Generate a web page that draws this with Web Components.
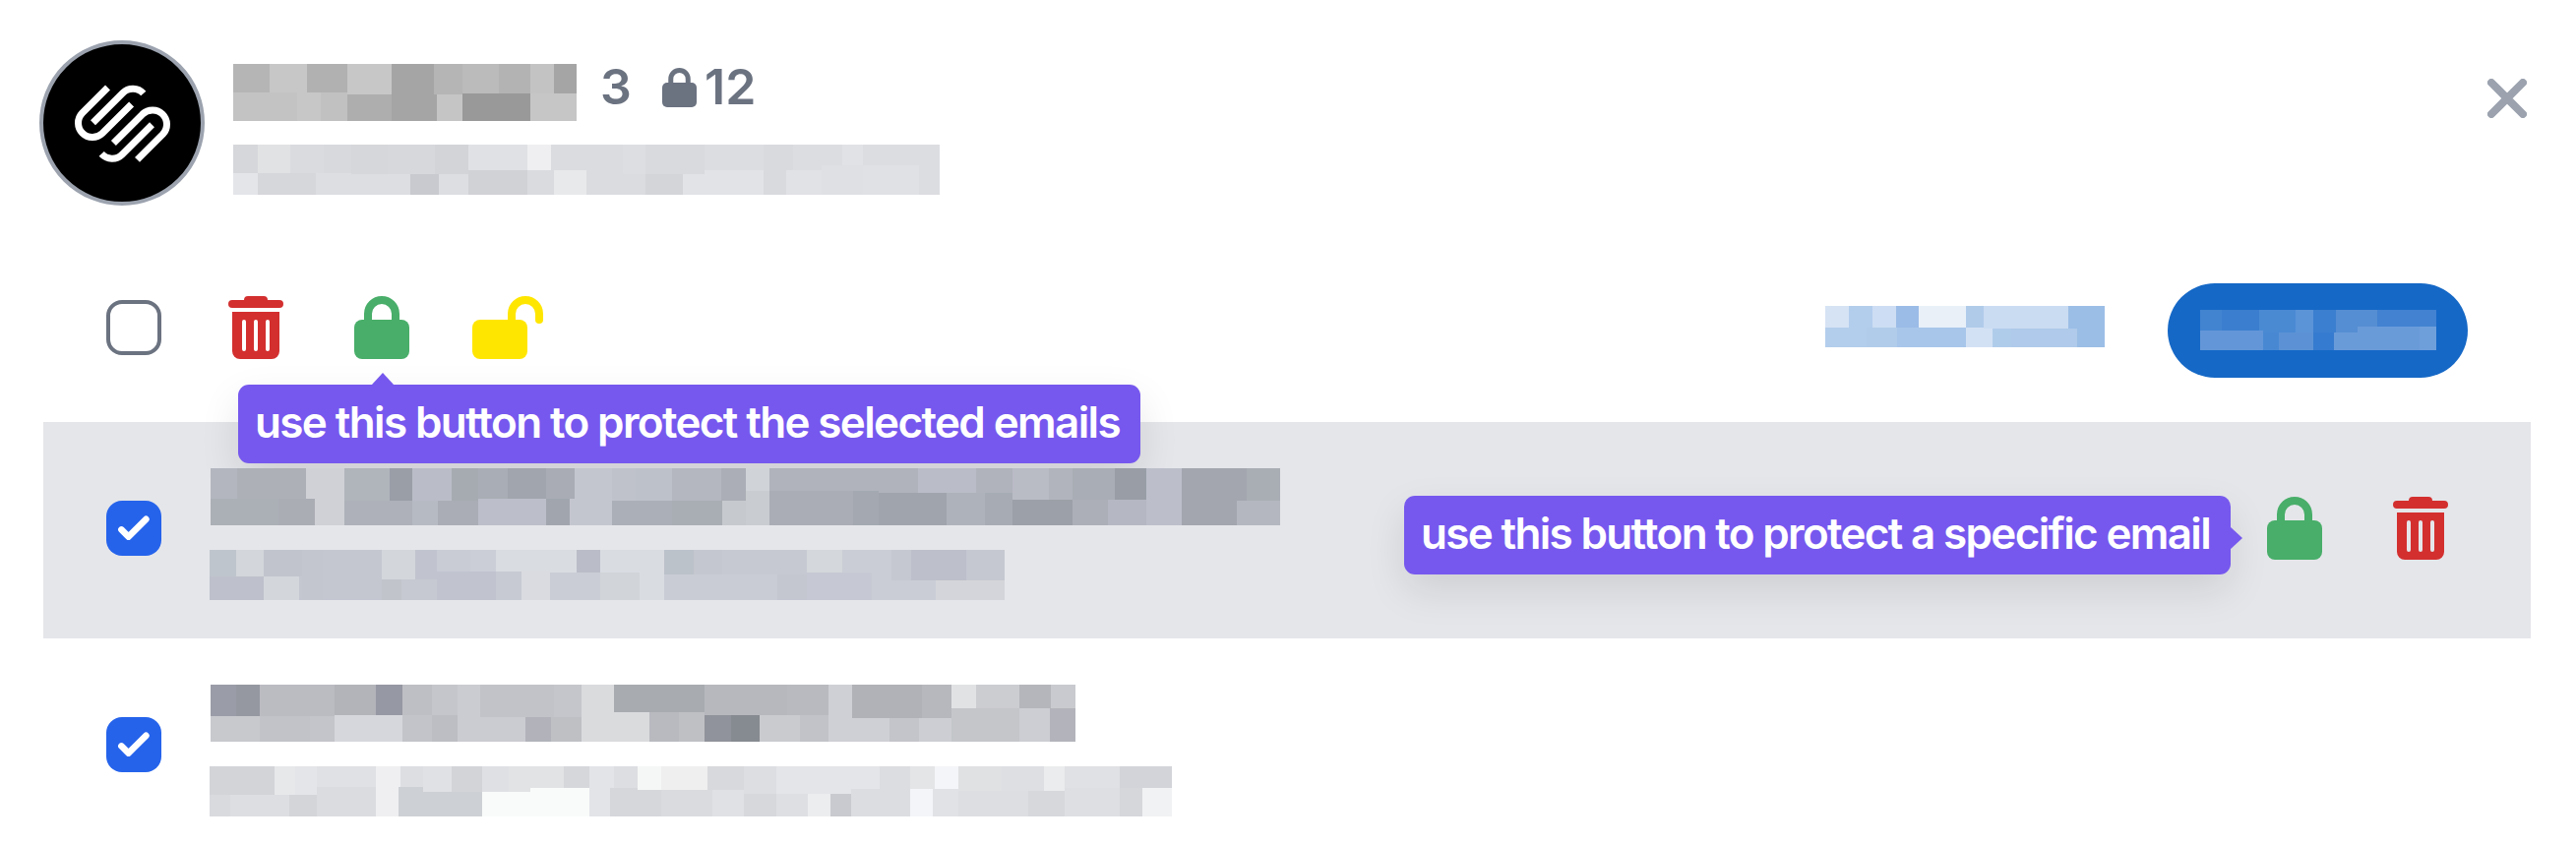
<!DOCTYPE html>
<html lang="en">
<head>
<meta charset="utf-8">
<title>Sender emails</title>
<style>
  html, body { margin: 0; background: #fff; }
  body { font-family: Inter, "Liberation Sans", sans-serif; overflow: hidden; }
</style>
</head>
<body>
<sender-panel></sender-panel>

<script>
const define = (name, html, setup) => {
  const tpl = document.createElement('template');
  tpl.innerHTML = html;
  customElements.define(name, class extends HTMLElement {
    connectedCallback() {
      if (this.shadowRoot) return;
      this.attachShadow({ mode: 'open' }).append(tpl.content.cloneNode(true));
      if (setup) setup(this, this.shadowRoot);
    }
  });
};

/* Redacted text. Each bar has two rows of cells:
   top cells are "right edge:height:colour", bottom cells "right edge:colour". */
const BARS = {
  name: { w: 349, h: 58,
    top: '37:29:b5b5b5 75:29:c7c7c7 116:29:b1b1b1 161:31:c7c7c7 204:58:a5a5a5 233:31:b5b5b5 270:30:bbbbbb 302:30:b3b3b3 326:30:c3c3c3 349:30:a5a5a5',
    bottom: '65:c3c3c3 89:c7c7c7 116:c1c1c1 161:aeaeae 207:a5a5a5 233:c5c5c5 302:999999 349:c6c6c6' },
  address: { w: 718, h: 51,
    top: '25:29:d6d7db 58:29:e1e2e3 92:29:dadbdf 120:29:d8d9dd 157:30:d6d7db 205:30:d7d8dc 239:30:d3d4d8 299:26:e0e1e5 323:26:efeff1 396:26:dbdce0 419:30:dddee2 479:30:d9dade 539:26:dcdde1 569:26:d9dade 598:26:dcdde1 619:21:dcdde1 640:21:e1e2e6 718:21:dcdde1',
    bottom: '25:e4e5e9 84:d6d7db 180:dddee2 209:c9cacf 239:dddee2 299:d1d2d6 326:dadbdf 359:e8e9ea 419:dbdce0 457:d4d5d9 539:e2e3e7 562:d9dade 598:e1e2e6 640:dfe0e4 697:e0e1e5 718:dcdde1' },
  link: { w: 284, h: 42,
    top: '24:22:d6e3f4 48:22:b3cdec 72:22:cdddf3 95:22:9bbce7 143:22:e9f0f8 161:22:b0cbea 247:23:cadcf2 256:23:9bbee6 284:42:9bbee6',
    bottom: '42:b3cdec 73:b1ccea 143:a8c6ea 170:d3e1f4 189:b0cceb 256:afcaea 284:9bbee6' },
  button: { w: 240, h: 41,
    top: '22:21:4284d0 60:21:3b7ecf 64:21:4a8ad3 97:23:4a8ad3 115:23:5b94d7 138:23:3b7fd0 160:23:568ed3 180:17:568ed3 240:17:4282d1',
    bottom: '64:6396d8 80:4888d3 115:5c92d5 136:357bcf 223:6a9bd9 240:6f9fdb' },
  subject1: { w: 1087, h: 58,
    top: '27:31:b3b6bf 97:31:adb1b7 106:31:d0d1d6 136:58:d0d1d6 182:33:b0b4bb 205:33:9a9ea7 245:33:babdc7 272:33:a6abb2 302:31:a9adb5 341:31:a1a5ad 370:31:a9acb4 408:58:c4c6cf 432:33:bfc2cb 469:33:bdc1ca 519:33:b4b7c0 544:33:abaeb6 568:23:d0d3d8 679:23:b0b3bb 719:25:b0b3bb 778:25:babdc7 815:25:b0b3bb 852:32:b9bbc5 876:32:b1b4bd 919:32:a9adb5 951:32:999ea6 987:58:bcbfca 1053:33:a3a6ae 1087:33:a9adb4',
    bottom: '69:abb0b7 106:abadb5 136:d0d1d6 205:aeb1b9 231:b6bac3 272:aaadb6 341:bcbfc9 365:a1a6ae 408:c4c6cf 469:abb0b8 520:a9adb4 544:c6c9cd 568:c9ccd0 653:aaadb5 679:a4a9b1 748:a0a5ad 787:aeb3bb 815:a7acb4 876:9ca0a8 912:acafb8 951:b5b8c2 987:bcbfca 1043:a3a6ae 1087:b4b7c0' },
  snippet1: { w: 808, h: 51,
    top: '27:27:bfc5cd 55:27:d3d6da 94:27:c1c4cd 115:51:c4c6cf 175:51:c4c7d0 209:30:d3d6db 231:30:c1c4ce 265:22:c9cbd5 291:22:cbcdd7 317:22:d9dce1 346:21:d9dce1 373:23:d9dce1 397:23:babdc7 437:23:d9dce1 462:51:d9dce1 492:25:bcc2ca 521:25:c4c7cf 607:25:c6c9d2 643:23:d4d7db 673:23:cbcdd6 693:31:cbcdd6 713:31:c5c8d1 769:31:bdc0ca 808:31:c5c8d1',
    bottom: '55:bec1cb 91:d3d6db 175:c4c7d0 195:c1c4cb 231:c6c9d1 291:c1c4ce 317:c7cad3 346:dadbe0 397:cacdd6 437:d1d4d8 462:d9dce1 577:c9ccd5 607:c4c7d0 673:c6c9d3 738:cacdd6 808:d4d5da' },
  subject2: { w: 879, h: 58,
    top: '26:32:9a9da7 50:32:9598a1 126:32:bbbcc2 168:31:b3b4ba 195:31:9698a3 225:31:bebfc4 251:31:c5c6cb 274:58:cbccd1 349:33:c2c3c8 377:33:c5c6cb 410:58:dadbdd 502:28:a8acb1 586:31:b7b8be 628:31:b9babf 652:58:cfd0d5 723:34:b1b2b7 753:34:b7b8bd 778:24:e1e2e4 822:24:cccdd1 854:24:b5b6bb 879:24:c9cacf',
    bottom: '50:c8c9cd 101:c2c3c8 126:c4c5ca 195:d6d7dc 225:c3c4c9 251:bdbec3 320:cbccd1 346:b2b3ba 377:bec0c4 446:dadbdd 476:b9bac0 502:bfc0c4 529:90939b 558:868b91 599:cacbcf 628:c2c3c8 690:cfd0d5 720:c4c5ca 753:cdced3 822:c4c6ca 853:cdced3 879:b3b4bb' },
  snippet2: { w: 978, h: 51,
    top: '66:29:d3d4d8 87:29:e7e8ea 109:29:e4e5e9 169:21:e0e1e5 194:21:efeff1 217:21:dddee2 246:26:e0e1e5 277:26:d3d4d8 304:26:dfe0e4 326:26:e2e3e4 360:22:e2e3e4 386:22:d6d7db 411:22:e3e4e8 435:22:dddee2 459:24:f5f7f6 506:24:efeff0 543:24:d8d9dd 576:28:dddee2 652:28:e4e5e8 681:23:e4e5e8 712:23:dcdde1 737:23:e4e5e7 761:23:f4f5f8 805:25:e0e1e3 848:25:dedfe3 869:25:ebeced 925:22:e0e1e5 978:22:d3d4d9',
    bottom: '21:d9dade 81:dddee2 109:d4d5d9 169:dbdce0 192:efeff1 277:cdd1d5 386:f9fbfa 407:e3e4e8 459:d6d7db 511:dadbdf 543:e0e1e5 576:d7d8dc 608:dedfe3 631:ecedef 652:c9cacf 712:dcdde1 735:f4f5f8 761:e1e2e6 832:dddee2 869:d7d8dc 925:dedfe3 948:d6d7db 978:f1f2f4' },
};

define('redacted-text', `
  <style>
    :host { display: block; position: relative; z-index: 2; flex: none; }
    svg { display: block; }
  </style>
  <svg shape-rendering="crispEdges"></svg>`, (el, root) => {
  const bar = BARS[el.getAttribute('bar')];
  const svg = root.querySelector('svg');
  svg.setAttribute('width', bar.w);
  svg.setAttribute('height', bar.h);
  let out = '', x = 0;
  for (const cell of bar.bottom.split(' ')) {
    const [end, colour] = cell.split(':');
    out += `<rect x="${x}" width="${end - x}" height="${bar.h}" fill="#${colour}"/>`;
    x = +end;
  }
  x = 0;
  for (const cell of bar.top.split(' ')) {
    const [end, h, colour] = cell.split(':');
    out += `<rect x="${x}" width="${end - x}" height="${h}" fill="#${colour}"/>`;
    x = +end;
  }
  svg.innerHTML = out;
});

define('icon-lock', `
  <style>:host { display: block; flex: none; width: 56px; height: 64px; color: #48ae69; } svg { display: block; width: 100%; height: 100%; }</style>
  <svg viewBox="0 0 56 64"><rect y="24" width="56" height="40" rx="8" fill="currentColor"/><path d="M14 26V18a14 14 0 0 1 28 0V26" fill="none" stroke="currentColor" stroke-width="8"/></svg>`);

define('icon-unlock', `
  <style>:host { display: block; flex: none; width: 72px; height: 64px; color: #ffe600; } svg { display: block; }</style>
  <svg width="72" height="64" viewBox="0 0 72 64"><rect y="24" width="56" height="40" rx="8" fill="currentColor"/><path d="M40 28V18a14 14 0 0 1 28 0V24" fill="none" stroke="currentColor" stroke-width="8"/><circle cx="68" cy="24" r="4" fill="currentColor"/></svg>`);

define('icon-trash', `
  <style>:host { display: block; flex: none; width: 56px; height: 64px; color: #d32f2f; } svg { display: block; }</style>
  <svg width="56" height="64" viewBox="0 0 56 64" fill="currentColor">
    <path d="M16 4a4 4 0 0 1 4-4H36a4 4 0 0 1 4 4H52a4 4 0 0 1 0 8H4a4 4 0 0 1 0-8Z"/>
    <path fill-rule="evenodd" d="M4 16H52V56a8 8 0 0 1-8 8H12a8 8 0 0 1-8-8ZM14 26V54a2 2 0 0 0 4 0V26a2 2 0 0 0-4 0ZM26 26V54a2 2 0 0 0 4 0V26a2 2 0 0 0-4 0ZM38 26V54a2 2 0 0 0 4 0V26a2 2 0 0 0-4 0Z"/>
  </svg>`);

define('icon-close', `
  <style>:host { display: block; flex: none; width: 40px; height: 40px; } svg { display: block; }</style>
  <svg width="40" height="40" viewBox="0 0 40 40"><path d="M4 4 36 36M36 4 4 36" stroke="#9ca3af" stroke-width="8" stroke-linecap="round"/></svg>`);

define('check-box', `
  <style>
    :host { display: block; flex: none; box-sizing: border-box; width: 56px; height: 56px; border-radius: 16px; border: 4px solid #6b7280; }
    :host([checked]) { border: 0; background: #2563eb; }
    svg { display: none; }
    :host([checked]) svg { display: block; }
  </style>
  <svg width="56" height="56" viewBox="0 0 56 56"><path d="M15.4 29.4 22.6 36.6 40.4 18.8" fill="none" stroke="#fff" stroke-width="6.6" stroke-linecap="round" stroke-linejoin="round"/></svg>`);

define('sender-avatar', `
  <style>:host { display: block; flex: none; box-sizing: border-box; width: 168px; height: 168px; border: 4px solid #9ca3af; border-radius: 50%; background: #000; } svg { display: block; filter: blur(.7px); }</style>
  <svg width="160" height="160" viewBox="14 15 160 160" fill="none" stroke="#fff" stroke-width="7">
    <g id="half"><path d="M79.5 59 53.5 85A14.5 14.5 0 0 0 74 105.5L103.6 76"/><path d="M64.5 94.7 94.8 64.5A14.5 14.5 0 0 1 115.8 65"/></g>
    <use href="#half" transform="rotate(180 94.5 95.7)"/>
  </svg>`);

/* Tooltip bubble; the letter spacing is fitted so the label takes up text-width pixels. */
define('hint-bubble', `
  <style>
    :host { position: absolute; z-index: 1; display: flex; align-items: center; box-sizing: border-box; height: 80px; padding-left: 17px; border-radius: 11px; background: #7658ee; box-shadow: 0 16px 40px rgba(0,0,0,.1); color: #fff; font-size: 44px; font-weight: 600; line-height: 80px; white-space: nowrap; }
    .label { display: inline-block; position: relative; top: -2px; }
    .tip { position: absolute; background: #7658ee; }
    :host([arrow="up"]) .tip { left: 135px; top: -12px; width: 24px; height: 13px; clip-path: polygon(50% 0, 100% 100%, 0 100%); }
    :host([arrow="right"]) .tip { right: -12px; top: 31px; width: 13px; height: 24px; clip-path: polygon(0 0, 100% 50%, 0 100%); }
  </style>
  <span class="label"><slot></slot></span><span class="tip"></span>`, (el, root) => {
  const label = root.querySelector('.label');
  const gap = +el.getAttribute('text-width') - label.getBoundingClientRect().width;
  label.style.letterSpacing = gap / el.textContent.trim().length + 'px';
});

define('panel-header', `
  <style>
    :host { display: flex; align-items: flex-start; height: 285px; box-sizing: border-box; padding: 41px 50px 0 40px; }
    .who { display: flex; flex-direction: column; gap: 24px; margin: 24px 0 0 29px; flex: 1; }
    .line { display: flex; align-items: center; height: 58px; color: #6b7280; font-size: 50px; font-weight: 600; line-height: 58px; }
    .count { margin-left: 24px; width: 63px; }
    .kept { margin-left: 8px; }
    span { position: relative; top: -6px; }
    icon-lock { width: 35px; height: 40px; color: #6b7280; margin-top: -10px; }
    icon-close { margin-top: 39px; }
  </style>
  <sender-avatar></sender-avatar>
  <div class="who">
    <div class="line"><redacted-text bar="name"></redacted-text><span class="count">3</span><icon-lock></icon-lock><span class="kept">12</span></div>
    <redacted-text bar="address"></redacted-text>
  </div>
  <icon-close></icon-close>`);

define('panel-toolbar', `
  <style>
    :host { display: flex; align-items: center; height: 96px; margin-bottom: 48px; padding: 0 110px 0 108px; }
    icon-trash { margin-left: 68px; }
    .lock { position: relative; margin: 0 64px 0 72px; }
    hint-bubble { left: -118px; top: 90px; width: 917px; }
    .link { margin: -2px 64px 0 auto; }
    .action { display: flex; align-items: center; justify-content: center; box-sizing: border-box; width: 305px; height: 96px; margin-top: 6px; padding: 0 0 1px 1px; border-radius: 48px; background: #1568c6; }
  </style>
  <check-box></check-box>
  <icon-trash></icon-trash>
  <div class="lock"><icon-lock></icon-lock><hint-bubble arrow="up" text-width="879">use this button to protect the selected emails</hint-bubble></div>
  <icon-unlock></icon-unlock>
  <redacted-text class="link" bar="link"></redacted-text>
  <div class="action"><redacted-text bar="button"></redacted-text></div>`);

define('email-row', `
  <style>
    :host { display: flex; align-items: flex-start; box-sizing: border-box; height: 220px; padding: 0 84px 0 64px; }
    :host([active]) { background: #e5e6ea; }
    check-box { margin-top: 80px; }
    .body { display: flex; flex-direction: column; gap: 25px; margin: 47px auto 0 50px; }
    .snippet { margin-left: -1px; }
  </style>
  <check-box checked></check-box>
  <div class="body"></div>
  <slot></slot>`, (el, root) => {
  for (const part of ['subject', 'snippet']) {
    const bar = document.createElement('redacted-text');
    bar.className = part;
    bar.setAttribute('bar', part + el.getAttribute('mail'));
    root.querySelector('.body').append(bar);
  }
});

define('row-actions', `
  <style>
    :host { display: flex; gap: 72px; margin-top: 76px; }
    .lock { position: relative; }
    hint-bubble { left: -877px; top: -1px; width: 840px; }
  </style>
  <div class="lock"><icon-lock></icon-lock><hint-bubble arrow="right" text-width="802">use this button to protect a specific email</hint-bubble></div>
  <icon-trash></icon-trash>`);

define('sender-panel', `
  <style>
    :host { display: block; width: 2618px; height: 858px; overflow: hidden; background: #fff; }
    .list { margin: 0 46px 0 44px; }
  </style>
  <panel-header></panel-header>
  <panel-toolbar></panel-toolbar>
  <div class="list">
    <email-row mail="1" active><row-actions></row-actions></email-row>
    <email-row mail="2"></email-row>
  </div>`);
</script>
</body>
</html>
